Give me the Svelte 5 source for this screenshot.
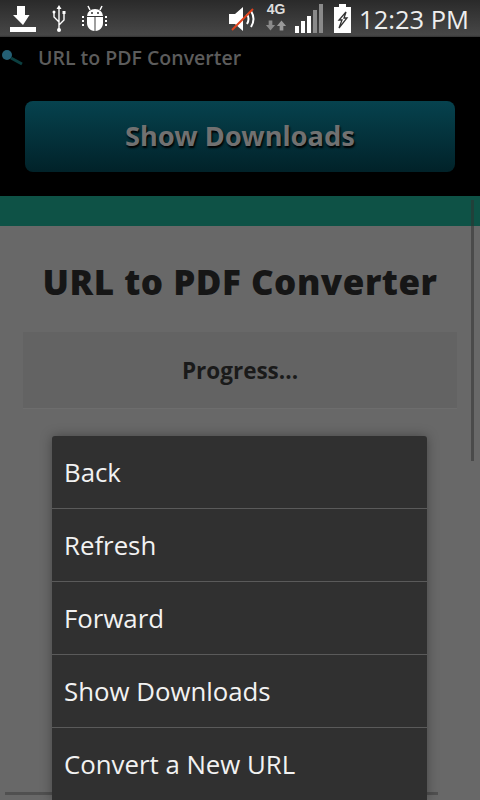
<script>
  const items = ['Back', 'Refresh', 'Forward', 'Show Downloads', 'Convert a New URL'];
</script>

<div class="screen">
  <header class="status">
    <div class="left">
      <svg width="26" height="26" viewBox="0 0 26 26"><path d="M7 0h8v0h0v9h4.500L13 19 3 9h4z" fill="#fff"/><rect x="0" y="21" width="26" height="5" fill="#fff"/></svg>
      <svg width="14" height="28" viewBox="0 0 14 28"><path d="M7 24V3M7 17L2 12V8M7 20l5-5v-6" fill="none" stroke="#fff" stroke-width="1.400"/><path d="M7 0l2.500 4h-5z" fill="#fff"/><circle cx="7" cy="25" r="2" fill="#fff"/><circle cx="2" cy="7" r="1.500" fill="#fff"/><rect x="10.500" y="6" width="3" height="3" fill="#fff"/></svg>
      <svg width="28" height="27" viewBox="0 0 28 27"><path d="M6 11a8 7 0 0 1 16 0z" fill="#fff"/><path d="M9 5L7 1M19 5l2-4" stroke="#fff" stroke-width="1.500"/><path d="M6 12h7.500v14C9 26 6 22 6 18zM14.500 12H22v6c0 4-3 8-7.500 8z" fill="#fff"/><path d="M1 12h3M1 16h3M1 20h3M24 12h3M24 16h3M24 20h3" stroke="#fff" stroke-width="1.800" stroke-dasharray="2 1"/><circle cx="11" cy="8" r="1" fill="#333"/><circle cx="17" cy="8" r="1" fill="#333"/></svg>
    </div>
    <div class="right">
      <svg width="30" height="24" viewBox="0 0 30 24"><path d="M0 7h6l8-7v24l-8-7H0z" fill="#fff"/><path d="M18 7q3 5 0 10M22 4q5 8 0 16" fill="none" stroke="#fff" stroke-width="2"/><path d="M3 23L24 2" stroke="#e2421c" stroke-width="2"/></svg>
      <div class="net">
        <span>4G</span>
        <svg width="22" height="11" viewBox="0 0 24 11"><path d="M4 0h4v5h3l-5 6-5-6h3z" fill="#8a8a8a"/><path d="M20 11h-4V6h-3l5-6 5 6h-3z" fill="#9a9a9a"/></svg>
      </div>
      <div class="bars">
        <i class="on b1"></i><i class="on b2"></i><i class="on b3"></i><i class="b4"></i><i class="b5"></i>
      </div>
      <svg width="17" height="29" viewBox="0 0 17 29"><path d="M5 0h7v3h5v26H0V3h5z" fill="#fff"/><path d="M12 8L5 16h3l-3 8 8-10h-3z" fill="none" stroke="#333" stroke-width="1.300"/></svg>
      <span class="time">12:23 PM</span>
    </div>
  </header>

  <section class="top">
    <div class="app-title">
      <svg width="24" height="20" viewBox="0 0 24 20"><circle cx="7" cy="8" r="5" fill="#245f74"/><path d="M11 11l11 6" stroke="#0b3f40" stroke-width="3"/></svg>
      <span>URL to PDF Converter</span>
    </div>
    <div class="btn-wrap"><button>Show Downloads</button></div>
    <div class="band"></div>
  </section>

  <main class="page">
    <h1>URL to PDF Converter</h1>
    <div class="progress">Progress...</div>
  </main>

  <div class="vscroll"></div>
  <div class="hscroll"></div>

  <nav class="menu">
    {#each items as item}
      <div class="row">{item}</div>
    {/each}
  </nav>
</div>

<style>
  :global(body) { margin: 0; background: #686868; }
  .screen {
    position: relative;
    width: 480px;
    height: 800px;
    overflow: hidden;
    background: #686868;
    font-family: "Open Sans", "Noto Sans", sans-serif;
  }
  .status {
    height: 37px;
    box-sizing: border-box;
    padding: 0 11px 0 10px;
    display: flex;
    align-items: center;
    justify-content: space-between;
    background: linear-gradient(#2a2a2a, #474747 95%, #333);
  }
  .left { display: flex; align-items: center; gap: 16px; }
  .left svg:nth-child(3) { margin-left: -1px; }
  .right { display: flex; align-items: center; }
  .net { width: 24px; margin: -3px 2px 0 5px; display: flex; flex-direction: column; align-items: center; }
  .net span { font: 700 14px/13px "Liberation Sans", sans-serif; color: #ddd; margin-bottom: 4px; }
  .bars { display: flex; align-items: flex-end; gap: 2px; height: 30px; margin: 0 11px 0 5px; padding-bottom: 1px; box-sizing: border-box; }
  .bars i { width: 4px; background: #8a8a8a; display: block; }
  .bars .on { background: #fff; }
  .b1 { height: 7px; } .b2 { height: 12px; } .b3 { height: 17px; } .b4 { height: 23px; } .b5 { height: 29px; }
  .time { margin-left: 8px; font-size: 25.500px; line-height: 30px; color: #eee; }
  .top { background: #000; height: 189px; display: flex; flex-direction: column; }
  .app-title {
    height: 40px;
    display: flex;
    align-items: center;
    gap: 14px;
    color: #5c5c5c;
    font-size: 19.500px;
    font-weight: 600;
  }
  .btn-wrap { flex: 1; padding: 24px 25px 24px; box-sizing: border-box; display: flex; }
  button {
    flex: 1;
    border: 0;
    border-radius: 8px;
    background: linear-gradient(#06424e, #012229);
    color: #717171;
    font: 700 27.300px "Noto Sans", "Open Sans", sans-serif;
    text-shadow: 1px 2px 2px #000;
    padding: 0 0 2px;
  }
  .band { height: 30px; background: #0e5246; }
  .page { padding: 0 23px; display: flex; flex-direction: column; }
  h1 {
    margin: 33px 0 28px;
    text-align: center;
    font-size: 35px;
    line-height: 45px;
    font-weight: 800;
    letter-spacing: 0.500px;
    color: #161616;
    white-space: nowrap;
  }
  .progress {
    height: 77px;
    display: flex;
    align-items: center;
    justify-content: center;
    background: #636363;
    border-bottom: 1px solid #6d6d6d;
    box-sizing: border-box;
    font-size: 22.500px;
    font-weight: 700;
    color: #1a1a1a;
  }
  .vscroll { position: absolute; left: 471px; top: 200px; width: 3px; height: 261px; background: rgba(50, 50, 50, 0.55); }
  .hscroll { position: absolute; left: 5px; top: 792px; width: 433px; height: 3px; background: #505050; }
  .menu {
    position: absolute;
    left: 52px;
    top: 436px;
    width: 375px;
    border-radius: 3px 3px 0 0;
    background: #303030;
    box-shadow: 0 0 12px rgba(0, 0, 0, 0.35);
  }
  .row {
    height: 72px;
    padding: 0 12px;
    display: flex;
    align-items: center;
    border-bottom: 1px solid #5a5a5a;
    color: #f2f2f2;
    font-size: 25.800px;
  }
  .row:last-child { border-bottom: 0; }
</style>
